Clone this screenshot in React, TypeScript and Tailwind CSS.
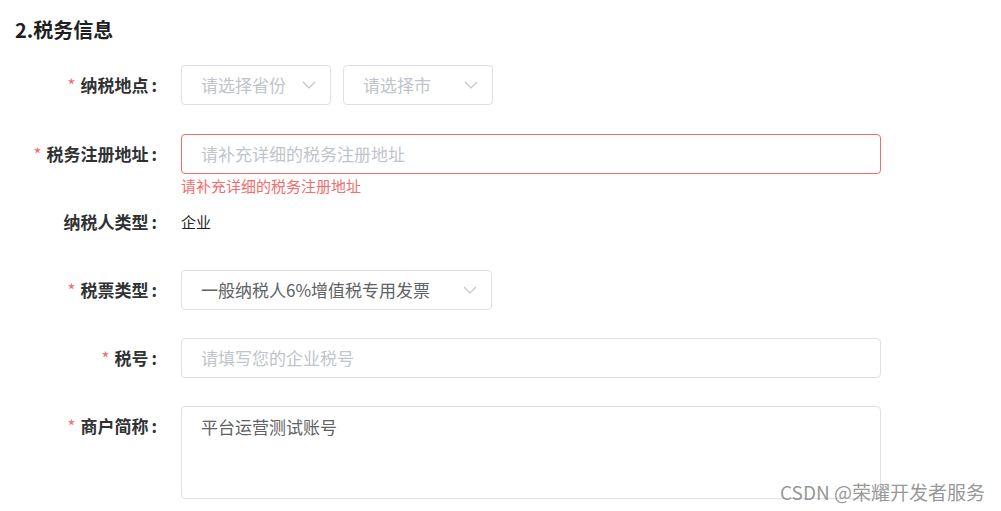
const font = { fontFamily: '"Noto Sans CJK SC", "Noto Sans", sans-serif' };

function Chevron() {
  return (
    <svg width="14" height="8" viewBox="0 0 14 8" fill="none" className="shrink-0">
      <path d="M1 1l6 6 6-6" stroke="#c0c4cc" strokeWidth="1.2" />
    </svg>
  );
}

function Label({ text, required = true }: { text: string; required?: boolean }) {
  return (
    <div className="w-[157px] shrink-0 text-right text-[17px] font-bold text-[#303133] leading-[40px]">
      {required && <span className="text-[#f56c6c] font-normal mr-[5px]">*</span>}
      {text}
      <span className="ml-[3px]">:</span>
    </div>
  );
}

function Select({ value, placeholder, width }: { value?: string; placeholder?: string; width: string }) {
  return (
    <div
      className={`${width} h-10 flex items-center justify-between pl-[19px] pr-[14px] border border-[#dcdfe6] rounded-[4px] bg-white text-[17px]`}
    >
      <span className={value ? 'text-[#606266]' : 'text-[#c0c4cc]'}>{value ?? placeholder}</span>
      <Chevron />
    </div>
  );
}

export default function App() {
  return (
    <div className="relative w-[1001px] h-[511px] bg-white overflow-hidden" style={font}>
      <div className="pl-[15px] pt-[16px]">
        <h2 className="text-[20px] font-bold text-[#1f1f1f] leading-[28px]">2.税务信息</h2>
      </div>

      <div className="mt-[21px] flex flex-col">
        <div className="flex items-start gap-6">
          <Label text="纳税地点" />
          <div className="flex gap-3">
            <Select placeholder="请选择省份" width="w-[150px]" />
            <Select placeholder="请选择市" width="w-[150px]" />
          </div>
        </div>

        <div className="flex items-start gap-6 mt-[29px]">
          <Label text="税务注册地址" />
          <div className="flex flex-col">
            <div className="w-[700px] h-10 flex items-center pl-[19px] border border-[#f56c6c] rounded-[4px] text-[17px] text-[#c0c4cc]">
              请补充详细的税务注册地址
            </div>
            <div className="text-[15px] text-[#f56c6c] leading-[24px] pb-[4px]">请补充详细的税务注册地址</div>
          </div>
        </div>

        <div className="flex items-start gap-6">
          <Label text="纳税人类型" required={false} />
          <div className="h-10 flex items-center text-[15px] text-[#1f1f1f]">企业</div>
        </div>

        <div className="flex items-start gap-6 mt-[28px]">
          <Label text="税票类型" />
          <Select value="一般纳税人6%增值税专用发票" width="w-[311px]" />
        </div>

        <div className="flex items-start gap-6 mt-[28px]">
          <Label text="税号" />
          <div className="w-[700px] h-10 flex items-center pl-[19px] border border-[#dcdfe6] rounded-[4px] text-[17px] text-[#c0c4cc]">
            请填写您的企业税号
          </div>
        </div>

        <div className="flex items-start gap-6 mt-[28px]">
          <Label text="商户简称" />
          <div className="w-[700px] h-[93px] pl-[19px] pt-[6px] border border-[#dcdfe6] rounded-[4px] text-[17px] text-[#606266] leading-[28px]">
            平台运营测试账号
          </div>
        </div>
      </div>

      <div className="absolute right-[16px] bottom-[7px] text-[19px] text-[#8a8a8a]/90 leading-[24px]">
        CSDN @荣耀开发者服务
      </div>
    </div>
  );
}
